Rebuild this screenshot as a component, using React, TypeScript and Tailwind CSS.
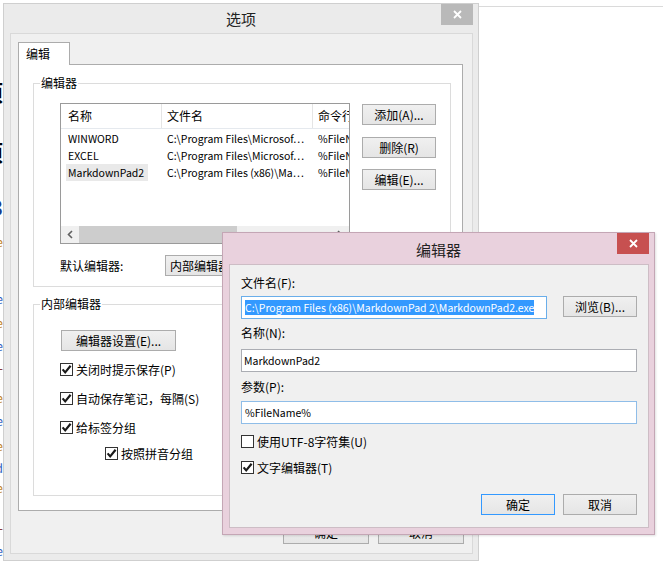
import type { ReactNode } from "react";

const FONT = "font-['Noto_Sans_CJK_SC','Noto_Sans',sans-serif]";

type Row = { name: string; file: string; cmd: string; selected?: boolean };

const rows: Row[] = [
  { name: "WINWORD", file: "C:\\Program Files\\Microsof…", cmd: "%FileName%" },
  { name: "EXCEL", file: "C:\\Program Files\\Microsof…", cmd: "%FileName%" },
  { name: "MarkdownPad2", file: "C:\\Program Files (x86)\\Ma…", cmd: "%FileName%", selected: true },
];

function CloseBtn({ red, className }: { red?: boolean; className: string }) {
  return (
    <div
      className={`absolute top-0 flex h-[21px] w-[32px] items-center justify-center ${
        red ? "bg-[#c75050]" : "bg-[#b9b9b9]"
      } ${className}`}
    >
      <svg width="9" height="9" viewBox="0 0 9 9">
        <path d="M1 1L8 8M8 1L1 8" stroke="#fff" strokeWidth="1.8" />
      </svg>
    </div>
  );
}

function Btn({ children, className = "", primary }: { children: ReactNode; className?: string; primary?: boolean }) {
  return (
    <div
      className={`flex h-[21px] w-[74px] shrink-0 items-center justify-center border bg-linear-to-b from-[#f0f0f0] to-[#e5e5e5] text-[12px] leading-[16px] text-black ${
        primary ? "border-[#3399ff]" : "border-[#acacac]"
      } ${className}`}
    >
      {children}
    </div>
  );
}

function Check({ checked }: { checked?: boolean }) {
  return (
    <span className="flex h-[13px] w-[13px] shrink-0 items-center justify-center border border-[#333] bg-white">
      {checked && (
        <svg width="11" height="11" viewBox="0 0 11 11">
          <path d="M1.6 5.4L4.2 8.4L9.6 1.8" stroke="#1a1a1a" strokeWidth="2.2" fill="none" />
        </svg>
      )}
    </span>
  );
}

function CheckRow({ label, checked, className = "" }: { label: string; checked?: boolean; className?: string }) {
  return (
    <div className={`flex h-[13px] items-center gap-[3px] ${className}`}>
      <Check checked={checked} />
      <span className="whitespace-nowrap text-[12px] leading-[16px]">{label}</span>
    </div>
  );
}

function Group({ title, className, children }: { title: string; className: string; children: ReactNode }) {
  return (
    <div className={`relative w-[418px] shrink-0 border border-[#dcdcdc] ${className}`}>
      <span className="absolute left-[6px] top-[-9px] bg-white px-[1px] text-[12px] leading-[16px]">{title}</span>
      {children}
    </div>
  );
}

function EditorList() {
  return (
    <div className="flex h-[141px] w-[290px] shrink-0 flex-col overflow-hidden border border-[#9a9a9a] bg-white">
      <div className="flex h-[25px] shrink-0 border-b border-[#e5e9ee] text-[12px] leading-[16px]">
        <div className="flex w-[101px] shrink-0 items-center border-r border-[#e5e5e5] pl-[7px]">名称</div>
        <div className="flex w-[151px] shrink-0 items-center border-r border-[#e5e5e5] pl-[5px]">文件名</div>
        <div className="flex min-w-0 flex-1 items-center overflow-hidden whitespace-nowrap pl-[5px]">命令行</div>
      </div>
      <div className="flex flex-col pt-[1px]">
        {rows.map((r) => (
          <div key={r.name} className="flex h-[17px] items-center whitespace-nowrap text-[10.5px] leading-[15px]">
            <div className="flex h-full w-[101px] shrink-0 items-center pl-[5px]">
              <span className={`flex h-full items-center px-[2px] ${r.selected ? "w-[82px] bg-[#e9e9e9]" : ""}`}>{r.name}</span>
            </div>
            <div className="w-[151px] shrink-0 overflow-hidden pl-[5px]">{r.file}</div>
            <div className="min-w-0 flex-1 overflow-hidden pl-[5px]">{r.cmd}</div>
          </div>
        ))}
      </div>
      <div className="mt-auto flex h-[17px] shrink-0 bg-[#f0f0f0]">
        <div className="flex w-[18px] items-center justify-center">
          <svg width="6" height="9" viewBox="0 0 6 9">
            <path d="M5 1L1.5 4.5L5 8" stroke="#606060" strokeWidth="1.6" fill="none" />
          </svg>
        </div>
        <div className="w-[158px] bg-[#cdcdcd]" />
        <div className="flex-1" />
        <div className="flex w-[18px] items-center justify-center">
          <svg width="6" height="9" viewBox="0 0 6 9">
            <path d="M1 1L4.5 4.5L1 8" stroke="#606060" strokeWidth="1.6" fill="none" />
          </svg>
        </div>
      </div>
    </div>
  );
}

function OptionsDialog() {
  return (
    <div className="absolute left-[3px] top-[3px] flex h-[558px] w-[476px] flex-col border border-[#cfcfcf] bg-[#ebebeb]">
      <div className="relative flex h-[29px] shrink-0 items-center justify-center pt-[1px] text-[15px] leading-[20px] text-[#222]">
        选项
        <CloseBtn className="right-[5px]" />
      </div>
      <div className="mb-[6px] ml-[6px] mr-[5px] flex flex-1 flex-col border border-[#d9d9d9] bg-[#f0f0f0]">
        <div className="ml-[7px] mt-[8px] flex">
          <div className="relative z-10 -mb-px flex h-[23px] w-[52px] items-center border-x border-t border-[#acacac] bg-white pl-[7px] text-[12px] leading-[16px]">
            编辑
          </div>
        </div>
        <div className="ml-[7px] flex h-[447px] w-[445px] flex-col border border-[#acacac] bg-white">
          <Group title="编辑器" className="ml-[14px] mt-[18px] h-[204px]">
            <div className="ml-[26px] mt-[19px] flex">
              <EditorList />
              <div className="ml-[12px] flex flex-col pt-[1px]">
                <Btn>添加(A)...</Btn>
                <Btn className="mt-[12px]">删除(R)</Btn>
                <Btn className="mt-[11px]">编辑(E)...</Btn>
              </div>
            </div>
            <div className="ml-[26px] mt-[11px] flex items-center">
              <span className="w-[105px] text-[12px] leading-[16px]">默认编辑器:</span>
              <div className="flex h-[21px] w-[185px] items-center border border-[#acacac] bg-linear-to-b from-[#f0f0f0] to-[#e5e5e5] pl-[4px] text-[12px] leading-[16px]">
                内部编辑器
              </div>
            </div>
          </Group>
          <Group title="内部编辑器" className="ml-[14px] mt-[17px] h-[192px]">
            <Btn className="ml-[27px] mt-[25px] w-[115px]">编辑器设置(E)...</Btn>
            <CheckRow className="ml-[26px] mt-[12px]" checked label="关闭时提示保存(P)" />
            <CheckRow className="ml-[26px] mt-[16px]" checked label="自动保存笔记，每隔(S)" />
            <CheckRow className="ml-[26px] mt-[16px]" checked label="给标签分组" />
            <CheckRow className="ml-[71px] mt-[13px]" checked label="按照拼音分组" />
          </Group>
        </div>
        <div className="mr-[8px] mt-[11px] flex justify-end gap-[9px]">
          <Btn className="h-[22px] w-[86px]">确定</Btn>
          <Btn className="h-[22px] w-[86px]">取消</Btn>
        </div>
      </div>
    </div>
  );
}

function EditorDialog() {
  return (
    <div className="absolute left-[222px] top-[232px] flex h-[303px] w-[433px] flex-col border border-[#c4a6b5] bg-[#e9d1dd] shadow-[1px_1px_2px_rgba(0,0,0,0.12)]">
      <div className="relative flex h-[31px] shrink-0 items-center justify-center pt-[2px] text-[15px] leading-[20px] text-[#222]">
        编辑器
        <CloseBtn red className="right-[5px]" />
      </div>
      <div className="mb-[6px] ml-[6px] mr-[5px] flex flex-1 flex-col border border-[#cdbdc5] bg-[#f0f0f0] pl-[11px] pt-[10px] text-[12px] leading-[16px]">
        <span>文件名(F):</span>
        <div className="mt-[5px] flex items-start">
          <div className="flex h-[23px] w-[306px] items-center overflow-hidden border border-[#6aaeea] bg-white pl-[3px]">
            <span className="whitespace-nowrap bg-[#3399ff] text-[10.5px] leading-[15px] text-white">
              C:\Program Files (x86)\MarkdownPad 2\MarkdownPad2.exe
            </span>
          </div>
          <Btn className="ml-[16px]">浏览(B)...</Btn>
        </div>
        <span className="mt-[6px]">名称(N):</span>
        <div className="mt-[8px] flex h-[23px] w-[396px] items-center border border-[#abadb3] bg-white pl-[2px] text-[10.5px]">
          MarkdownPad2
        </div>
        <span className="mt-[7px]">参数(P):</span>
        <div className="mt-[6px] flex h-[23px] w-[396px] items-center border border-[#8fbde8] bg-white pl-[3px] text-[10.5px]">
          %FileName%
        </div>
        <CheckRow className="mt-[11px]" label="使用UTF-8字符集(U)" />
        <CheckRow className="mt-[13px]" checked label="文字编辑器(T)" />
        <div className="mr-[11px] mt-[20px] flex justify-end gap-[8px]">
          <Btn primary>确定</Btn>
          <Btn>取消</Btn>
        </div>
      </div>
    </div>
  );
}

function BackgroundApp() {
  const bits = [
    { t: "项", c: "text-black text-[22px] font-bold", top: "top-[80px]" },
    { t: "项", c: "text-black text-[22px] font-bold", top: "top-[140px]" },
    { t: "3", c: "text-[#1a3a8a] text-[22px] font-bold", top: "top-[195px]" },
    { t: "e", c: "text-[#c08020] text-[12px]", top: "top-[236px]" },
    { t: "e", c: "text-[#3060c0] text-[12px]", top: "top-[293px]" },
    { t: "e", c: "text-[#c08020] text-[12px]", top: "top-[317px]" },
    { t: "e", c: "text-[#3060c0] text-[12px]", top: "top-[340px]" },
    { t: "-", c: "text-[#802020] text-[12px]", top: "top-[362px]" },
    { t: "e", c: "text-[#c08020] text-[12px]", top: "top-[392px]" },
    { t: "e", c: "text-[#3060c0] text-[12px]", top: "top-[415px]" },
    { t: "e", c: "text-[#c08020] text-[12px]", top: "top-[440px]" },
    { t: "d", c: "text-[#3060c0] text-[12px]", top: "top-[462px]" },
    { t: "e", c: "text-[#c08020] text-[12px]", top: "top-[482px]" },
    { t: "-", c: "text-[#802020] text-[12px]", top: "top-[522px]" },
    { t: "e", c: "text-[#3060c0] text-[12px]", top: "top-[545px]" },
  ];
  return (
    <>
      <div className="absolute left-0 top-0 h-[563px] w-[3px] overflow-hidden">
        {bits.map((b, i) => (
          <span key={i} className={`absolute right-0 leading-none ${b.top} ${b.c}`}>
            {b.t}
          </span>
        ))}
      </div>
      <div className="absolute left-[478px] right-0 top-[6px] h-px bg-[#dadada]" />
    </>
  );
}

export default function App() {
  return (
    <div className={`relative h-[563px] w-[663px] overflow-hidden bg-white text-black ${FONT}`}>
      <BackgroundApp />
      <OptionsDialog />
      <EditorDialog />
    </div>
  );
}
